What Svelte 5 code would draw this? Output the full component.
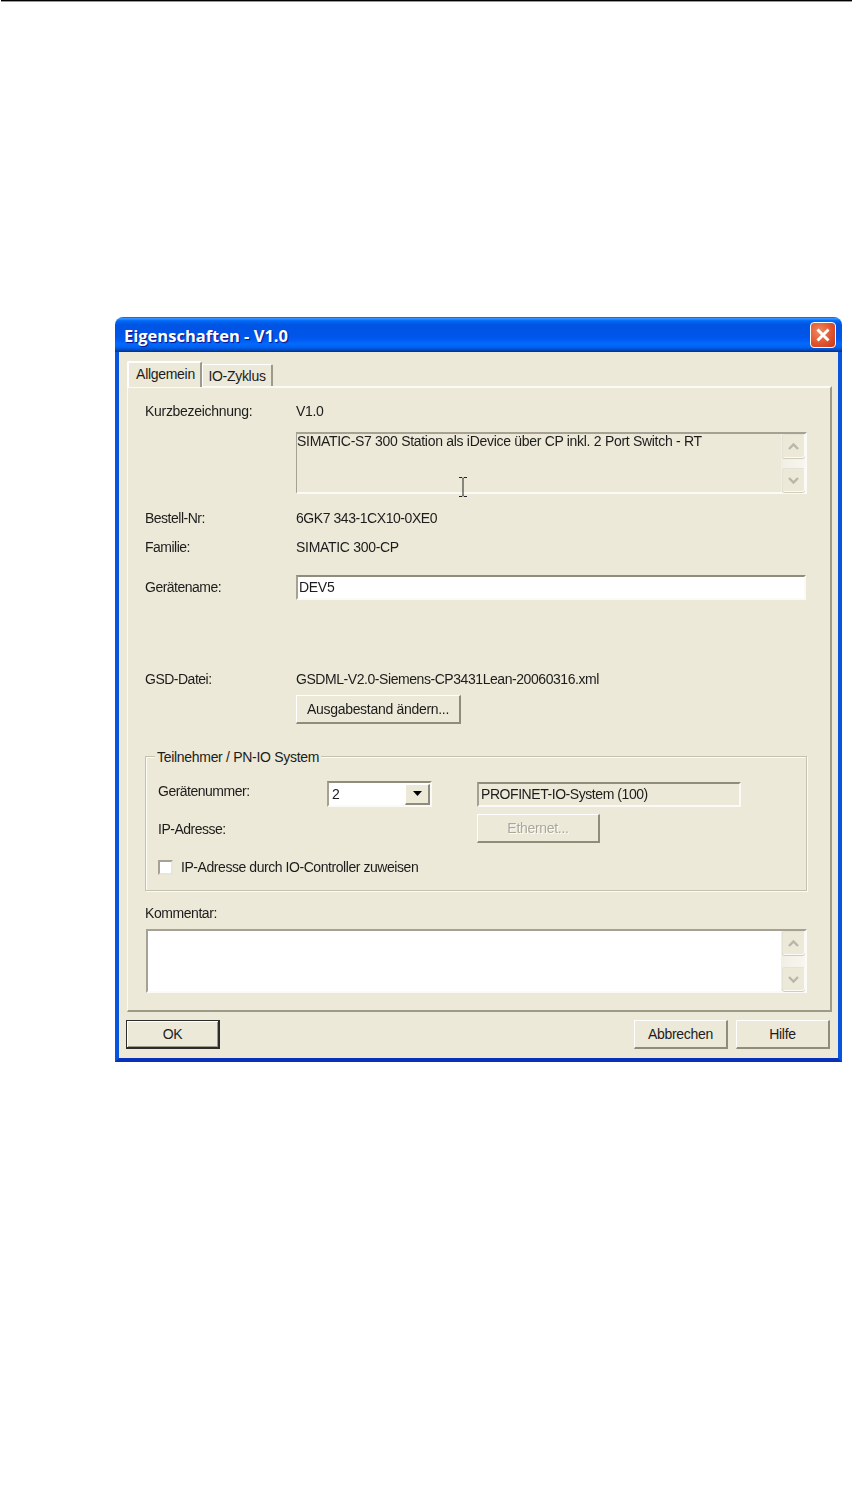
<script lang="ts">
	let deviceNumber = $state('2');
	let deviceName = $state('DEV5');
</script>

{#snippet spinner()}
	<div class="spinner">
		<div class="spin-btn">
			<svg width="13" height="9" viewBox="0 0 13 9"><path d="M2 7l4.5-4.5L11 7" fill="none" stroke="#b9b7a9" stroke-width="2.4"/></svg>
		</div>
		<div class="spin-btn">
			<svg width="13" height="9" viewBox="0 0 13 9"><path d="M2 2l4.5 4.5L11 2" fill="none" stroke="#b9b7a9" stroke-width="2.4"/></svg>
		</div>
	</div>
{/snippet}

<div class="page">
	<div class="rule"></div>

	<div class="window">
		<div class="titlebar">
			<span class="title">Eigenschaften - V1.0</span>
			<button class="close" aria-label="Schließen">
				<svg width="16" height="16" viewBox="0 0 16 16"><path d="M2.5 2.5l11 11M13.5 2.5l-11 11" stroke="#fff" stroke-width="3"/></svg>
			</button>
		</div>

		<div class="client">
			<div class="tabs">
				<div class="tab active">Allgemein</div>
				<div class="tab">IO-Zyklus</div>
			</div>

			<div class="panel">
				<div class="row first"><span class="label">Kurzbezeichnung:</span><span>V1.0</span></div>

				<div class="box desc">
					<span>SIMATIC-S7 300 Station als iDevice über CP inkl. 2 Port Switch - RT</span>
					{@render spinner()}
				</div>
				<svg class="ibeam" width="10" height="20" viewBox="0 0 10 20">
					<path d="M1 .5h3l1 1 1-1h3M5 1.500v17M1 19.500h3l1-1 1 1h3" fill="none" stroke="#222" stroke-width="1"/>
				</svg>

				<div class="row order"><span class="label">Bestell-Nr:</span><span class="tight">6GK7 343-1CX10-0XE0</span></div>
				<div class="row family"><span class="label">Familie:</span><span>SIMATIC 300-CP</span></div>

				<div class="row name">
					<span class="label name-label">Gerätename:</span>
					<input class="field" bind:value={deviceName} />
				</div>

				<div class="row gsd"><span class="label">GSD-Datei:</span><span class="tight">GSDML-V2.0-Siemens-CP3431Lean-20060316.xml</span></div>
				<div class="row output"><span class="label"></span><button class="btn change">Ausgabestand ändern...</button></div>

				<div class="group">
					<span class="legend">Teilnehmer / PN-IO System</span>

					<div class="group-row one">
						<span class="group-label">Gerätenummer:</span>
						<div class="select">
							<span class="select-value">{deviceNumber}</span>
							<div class="select-arrow">
								<svg width="9" height="5" viewBox="0 0 9 5"><path d="M0 0h9L4.500 5z" fill="#000"/></svg>
							</div>
						</div>
						<div class="system tight">PROFINET-IO-System (100)</div>
					</div>

					<div class="group-row two">
						<span class="group-label ip">IP-Adresse:</span>
						<button class="btn ethernet" disabled>Ethernet...</button>
					</div>

					<label class="check">
						<span class="checkbox"></span>
						<span class="tight">IP-Adresse durch IO-Controller zuweisen</span>
					</label>
				</div>

				<div class="row comment-label"><span class="tight">Kommentar:</span></div>
				<div class="box comment">
					{@render spinner()}
				</div>
			</div>

			<div class="actions">
				<button class="btn ok">OK</button>
				<div class="actions-right">
					<button class="btn action">Abbrechen</button>
					<button class="btn action">Hilfe</button>
				</div>
			</div>
		</div>
	</div>
</div>

<style>
	:global(body) {
		background: #fff;
	}

	.page {
		height: 1498px;
		box-sizing: border-box;
		font-family: "Liberation Sans", Arial, sans-serif;
		font-size: 14px;
		color: #1c1c1c;
		letter-spacing: -0.3px;
	}

	.tight {
		letter-spacing: -0.44px;
	}

	.rule {
		height: 1px;
		background: #000;
		box-shadow: 0 1px 0 #999;
		margin-left: 1px;
	}

	.window {
		width: 727px;
		height: 745px;
		margin: 316px 0 0 115px;
		display: flex;
		flex-direction: column;
		border-radius: 8px 8px 0 0;
		overflow: hidden;
		filter: blur(0.35px);
	}

	.titlebar {
		height: 35px;
		flex: none;
		display: flex;
		align-items: center;
		justify-content: space-between;
		padding: 0 6px 0 9px;
		box-sizing: border-box;
		background: linear-gradient(180deg, #0058ee 0%, #3593ff 4%, #288eff 6%, #127dff 8%, #036ffc 10%, #0262ee 14%, #0057e5 20%, #0054e3 24%, #0055eb 56%, #005bf5 66%, #026afe 76%, #0062ef 86%, #0052d6 92%, #0040ab 96%, #003092 100%);
	}

	.title {
		font-family: "Open Sans", "Noto Sans", sans-serif;
		font-weight: 700;
		font-size: 16.500px;
		letter-spacing: 0;
		margin-top: 2px;
		color: #fff;
		text-shadow: 1px 1px 1px #0f1089;
	}

	.close {
		width: 26px;
		height: 26px;
		padding: 0;
		display: flex;
		align-items: center;
		justify-content: center;
		border: 1px solid #fff;
		border-radius: 4px;
		background: radial-gradient(circle at 35% 35%, #f08a60 0%, #e0552f 55%, #c4391a 100%);
	}

	.client {
		flex: 1;
		display: flex;
		flex-direction: column;
		background: #ece9d8;
		border: solid #0855dd;
		border-width: 0 4px 4px 4px;
		border-bottom-color: #0831b8;
		padding: 9px 6px 0 8px;
		min-height: 0;
		box-sizing: border-box;
	}

	.tabs {
		height: 25px;
		display: flex;
		align-items: flex-end;
		flex: none;
	}

	.tab {
		height: 22px;
		width: 71px;
		box-sizing: border-box;
		display: flex;
		align-items: center;
		justify-content: center;
		border-left: 1px solid #fff;
		border-top: 1px solid #fff;
		border-right: 2px solid #9d9a8a;
		border-radius: 2px 2px 0 0;
	}

	.tab.active {
		height: 26px;
		width: 75px;
		margin-bottom: -1px;
		padding: 0 0 3px 2px;
		border-left-width: 2px;
		border-top-width: 2px;
		background: #ece9d8;
		position: relative;
		z-index: 1;
	}

	.panel {
		position: relative;
		height: 626px;
		flex: none;
		box-sizing: border-box;
		border-top: 2px solid #fbfaf6;
		border-left: 1px solid #fbfaf6;
		border-right: 2px solid #9d9a8a;
		border-bottom: 2px solid #9d9a8a;
		padding: 12px 0 0 17px;
	}

	.row {
		display: flex;
		align-items: center;
		height: 22px;
	}

	.label {
		width: 151px;
		flex: none;
		letter-spacing: -0.5px;
	}

	.first .label {
		letter-spacing: -0.3px;
	}

	.name-label {
		margin-bottom: 1px;
	}

	.order { margin-top: 13px; }
	.family { margin-top: 7px; }
	.name { margin-top: 17px; height: 25px; }
	.gsd { margin-top: 68px; }
	.output { margin-top: 5px; height: 29px; }
	.comment-label { margin-top: 11px; }

	.box {
		position: relative;
		box-sizing: border-box;
		border-top: 2px solid #a5a294;
		border-left: 2px solid #a5a294;
		border-bottom: 2px solid #fbfaf6;
		border-right: 2px solid #fbfaf6;
		line-height: 15px;
	}

	.desc {
		margin: 10px 0 0 151px;
		width: 511px;
		height: 62px;
		border-left-width: 1px;
	}

	.comment {
		margin: 5px 0 0 1px;
		width: 661px;
		height: 64px;
		background: #fff;
	}

	.ibeam {
		position: absolute;
		left: 330px;
		top: 89px;
	}

	.spinner {
		position: absolute;
		right: 0;
		top: 0;
		bottom: 0;
		width: 24px;
		display: flex;
		flex-direction: column;
		justify-content: space-between;
		padding: 0 0 0 1px;
		box-sizing: border-box;
		background: linear-gradient(90deg, #f1efe4, #f7f6ef);
	}

	.spin-btn {
		height: 24px;
		width: 23px;
		box-sizing: border-box;
		display: flex;
		align-items: center;
		justify-content: center;
		background: #ece9d8;
		border: 1px solid #e4e2d4;
		border-right-color: #fbfaf6;
		border-bottom-color: #fbfaf6;
		border-radius: 3px;
		box-shadow: 0 1px 0 #cfccbc;
	}

	.field {
		width: 510px;
		height: 25px;
		box-sizing: border-box;
		padding: 0 0 1px 1px;
		font: inherit;
		color: inherit;
		letter-spacing: inherit;
		background: #fff;
		border: solid;
		border-width: 2px;
		border-color: #8f8c7c #fbfaf6 #fbfaf6 #a5a294;
		border-radius: 0;
		outline: none;
	}

	.btn {
		box-sizing: border-box;
		padding: 0;
		font: inherit;
		color: inherit;
		letter-spacing: inherit;
		background: #ece9d8;
		border: solid;
		border-width: 1px 2px 2px 1px;
		border-color: #fff #8f8c7c #8f8c7c #fff;
	}

	.change {
		width: 165px;
		height: 29px;
	}

	.group {
		position: relative;
		box-sizing: border-box;
		margin-top: 32px;
		width: 662px;
		height: 135px;
		border: 1px solid #c4c1b0;
		box-shadow: 1px 1px 0 #fbfaf6, inset 1px 1px 0 #fbfaf6;
		padding: 24px 0 0 12px;
	}

	.legend {
		position: absolute;
		left: 9px;
		top: -10px;
		padding: 0 2px;
		line-height: 20px;
		background: #ece9d8;
	}

	.group-row {
		display: flex;
		align-items: center;
	}

	.group-row.one {
		height: 26px;
	}

	.group-row.two {
		height: 29px;
		margin-top: 7px;
	}

	.group-label {
		width: 169px;
		flex: none;
		margin-bottom: 7px;
		letter-spacing: -0.5px;
	}

	.group-label.ip {
		width: 319px;
		margin-bottom: 0;
	}

	.select {
		width: 105px;
		height: 26px;
		flex: none;
		box-sizing: border-box;
		display: flex;
		align-items: center;
		justify-content: space-between;
		background: #fff;
		border: 2px solid;
		border-color: #8f8c7c #fbfaf6 #fbfaf6 #a5a294;
		padding-left: 3px;
	}

	.select-arrow {
		width: 25px;
		height: 21px;
		box-sizing: border-box;
		margin-right: 0;
		display: flex;
		align-items: center;
		justify-content: center;
		background: #ece9d8;
		border: solid;
		border-width: 1px 2px 2px 1px;
		border-color: #fff #8f8c7c #8f8c7c #fff;
	}

	.system {
		width: 264px;
		height: 25px;
		margin-left: 45px;
		box-sizing: border-box;
		display: flex;
		align-items: center;
		padding-left: 2px;
		border: 2px solid;
		border-color: #8f8c7c #fbfaf6 #fbfaf6 #a5a294;
	}

	.ethernet {
		width: 123px;
		height: 29px;
		color: #aca899;
		text-shadow: 1px 1px 0 #fff;
	}

	.check {
		display: flex;
		align-items: center;
		height: 22px;
		margin-top: 13px;
		gap: 8px;
	}

	.checkbox {
		width: 15px;
		height: 15px;
		box-sizing: border-box;
		background: #fff;
		border: 2px solid;
		border-color: #a5a294 #e8e6d8 #e8e6d8 #a5a294;
	}

	.actions {
		display: flex;
		justify-content: space-between;
		margin: 8px 2px 0 -1px;
		flex: none;
	}

	.actions-right {
		display: flex;
		gap: 8px;
	}

	.ok {
		width: 94px;
		height: 29px;
		border: 2px solid #2b2b2b;
		border-width: 1px 2px 2px 1px;
		box-shadow: inset 1px 1px 0 #fff, inset -1px -1px 0 #9d9a8a;
	}

	.action {
		width: 94px;
		height: 29px;
	}
</style>
